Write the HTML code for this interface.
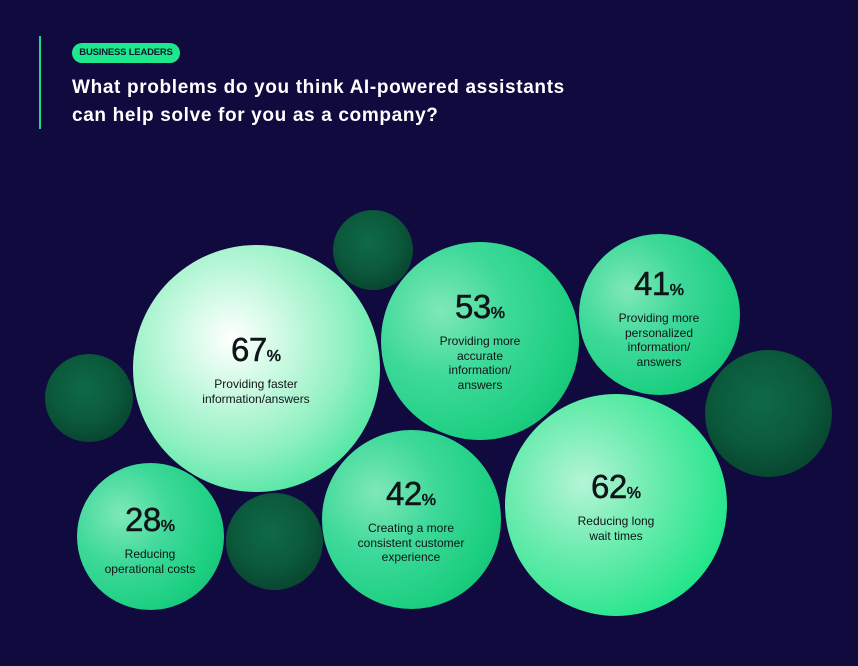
<!DOCTYPE html>
<html><head><meta charset="utf-8"><style>
*{margin:0;padding:0;box-sizing:border-box}
body{width:858px;height:666px;background:#100a3f;position:relative;overflow:hidden;font-family:"Liberation Sans",sans-serif}
.bar{position:absolute;left:39px;top:36px;width:2px;height:93px;background:#1ed98a}
.tag{position:absolute;left:72px;top:43px;height:20px;width:108px;border-radius:10px;background:#1ee88e;color:#0f1a2a;font-size:9.5px;font-weight:bold;line-height:20px;text-align:center;letter-spacing:-0.2px}
h1{position:absolute;left:72px;top:74px;color:#fff;font-size:19px;font-weight:bold;line-height:28px;letter-spacing:0.65px}
.c{position:absolute;border-radius:50%}
.l{background:radial-gradient(circle at 40% 38%,#ffffff 0%,#d6fbe8 20%,#8ef0c0 55%,#3fe29a 85%,#22d882 100%)}
.m{background:radial-gradient(circle at 30% 35%,#7fe8b8 0%,#3ed99a 35%,#1ccf80 70%,#12b56e 100%)}
.g{background:radial-gradient(circle at 35% 40%,#b4f5d6 0%,#6eecb0 35%,#25e58b 75%,#10d877 100%)}
.d{background:radial-gradient(circle at 45% 40%,#0e6a47 0%,#0b5a3c 45%,#07432d 80%,#053224 100%)}
.t{position:absolute;text-align:center;color:#101418;transform:translateX(-50%);white-space:nowrap}
.t b{display:block;font-size:33px;line-height:34px;font-weight:normal;letter-spacing:-0.5px;-webkit-text-stroke:0.5px #101418}
.t b span{font-size:16px;letter-spacing:0;-webkit-text-stroke:0.6px #101418}
.t i{display:block;font-style:normal;font-size:12px;line-height:14.5px;margin-top:3px}
</style></head><body>
<div class="bar"></div>
<div class="tag">BUSINESS LEADERS</div>
<h1>What problems do you think AI-powered assistants<br>can help solve for you as a company?</h1>

<div class="c d" style="left:333px;top:210px;width:80px;height:80px"></div>
<div class="c d" style="left:45px;top:354px;width:88px;height:88px"></div>
<div class="c d" style="left:705px;top:350px;width:127px;height:127px"></div>
<div class="c d" style="left:226px;top:493px;width:97px;height:97px"></div>

<div class="c l" style="left:133px;top:245px;width:247px;height:247px"></div>
<div class="c m" style="left:381px;top:242px;width:198px;height:198px"></div>
<div class="c m" style="left:579px;top:234px;width:161px;height:161px"></div>
<div class="c g" style="left:505px;top:394px;width:222px;height:222px"></div>
<div class="c m" style="left:322px;top:430px;width:179px;height:179px"></div>
<div class="c m" style="left:77px;top:463px;width:147px;height:147px"></div>

<div class="t" style="left:256px;top:333px"><b>67<span>%</span></b><i>Providing faster<br>information/answers</i></div>
<div class="t" style="left:480px;top:290px"><b>53<span>%</span></b><i>Providing more<br>accurate<br>information/<br>answers</i></div>
<div class="t" style="left:659px;top:267px"><b>41<span>%</span></b><i>Providing more<br>personalized<br>information/<br>answers</i></div>
<div class="t" style="left:616px;top:470px"><b>62<span>%</span></b><i>Reducing long<br>wait times</i></div>
<div class="t" style="left:411px;top:477px"><b>42<span>%</span></b><i>Creating a more<br>consistent customer<br>experience</i></div>
<div class="t" style="left:150px;top:503px"><b>28<span>%</span></b><i>Reducing<br>operational costs</i></div>
</body></html>
